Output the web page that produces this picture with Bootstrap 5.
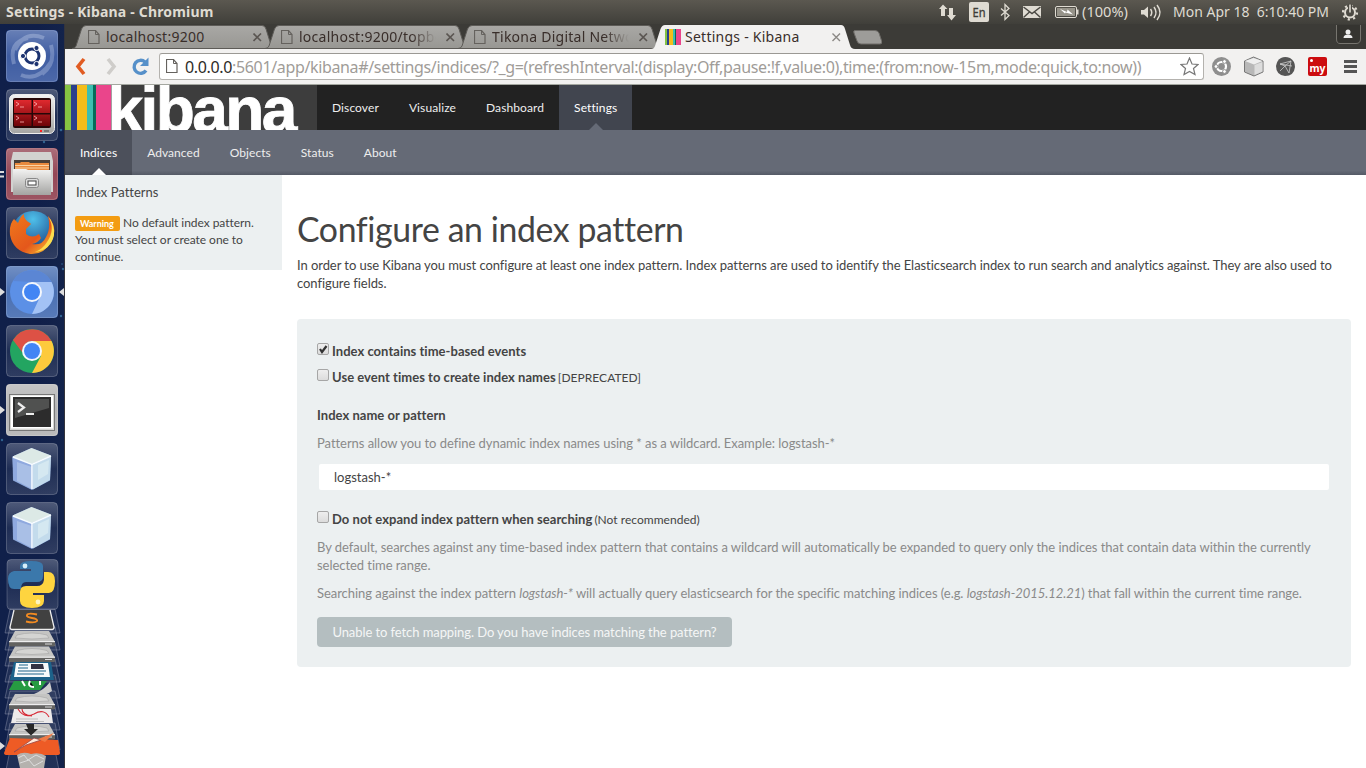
<!DOCTYPE html>
<html lang="en">
<head>
<meta charset="utf-8">
<title>Settings - Kibana</title>
<link rel="stylesheet" href="https://cdn.jsdelivr.net/npm/bootstrap@5.3.0/dist/css/bootstrap.min.css">
<style>
html,body{height:768px;overflow:hidden}
body{font-family:Lato,sans-serif;font-size:13px;line-height:18px;color:#444;background:#fff;font-variant-ligatures:none;letter-spacing:-.065px}
svg{display:block;flex:none;letter-spacing:0}
.ui{font-family:"Noto Sans",sans-serif;white-space:nowrap}
.panelbar{height:24px;background:linear-gradient(#5b5850,#403f3a);color:#dfdbd2;font-size:14px}
.wtitle{font-weight:700;font-size:14px;padding-left:6px;letter-spacing:.18px}
.tray{position:relative;width:430px;height:24px}
.launcher{width:65px;height:744px;padding:6px 0 0 6px;background:linear-gradient(90deg,#10204a,#101f49 60%,#13234b);border-right:1px solid #34343c;gap:7px;position:relative}
.pip{position:absolute}
.tabstrip{height:25px;background:#3c3b37;padding:1px 0 0 7px}
.ctab{width:193px;height:24px;position:relative;color:#392e2a;font-size:14px;padding:0 3px 0 16px}
.ctab .shape{position:absolute;left:0;top:0}
.ctab .inner{position:relative;height:24px}
.ctab .lbl{overflow:hidden;flex:1 1 0;min-width:0;margin-left:6px;margin-right:10px;letter-spacing:.25px}
.fade-lbl{-webkit-mask:linear-gradient(90deg,#000 82%,transparent)}
.toolbar{height:36px;background:#f2f1f0;border-bottom:1px solid #a4a7a0;padding-left:9px}
.omni{width:1045px;height:27px;margin-left:9px;border:1px solid #b4b2ae;border-top-color:#9b9994;border-radius:3px;background:#fff;padding:0 4px 0 6px;color:#a09c98;font-size:16px;letter-spacing:-.35px}
.omni b{font-weight:400;color:#2e2b28}
.knav{height:45px;background:#222;font-size:12px}
.knav,.ksub{letter-spacing:.06px}
.knav{letter-spacing:.1px}
.knav a,.ksub a{color:#eee;text-decoration:none;padding:0 15px;height:45px;line-height:45px;position:relative;display:block}
.knav a.on{background:#41454f;color:#fff}
.ksub{height:45px;background:linear-gradient(#656a76 90%,#555a66);font-size:12px}
.ksub a.on{background:linear-gradient(#4c505b 90%,#444852);color:#fff}
.on::after{content:"";position:absolute;left:50%;bottom:0;margin-left:-7px;border:7px solid transparent;border-top:0;border-bottom-color:#656a76}
.ksub .on::after{border-bottom-color:#fff}
.side{width:217px;height:95px;background:#ecf0f1;padding:8px 10px 0;letter-spacing:0}
.side p{font-size:12px;line-height:17px;margin:13px 0 0;letter-spacing:-.05px}
.warn{background:#f39c12;color:#fff;font-weight:700;font-size:9px;line-height:15px;border-radius:2px;padding:0 5px;width:45px;height:15px;display:inline-block;vertical-align:0}
.main{padding:36px 15px 0}
.main h1{font-size:33.8px;line-height:37px;margin:0 0 8px;font-weight:400;color:#444;letter-spacing:-.38px}
.well-box{background:#ecf0f1;border-radius:4px;margin-top:27px;height:348px;padding:23px 20px 0}
.help{color:#8a8a8a;margin:10px 0 0;letter-spacing:-.045px}
.chk{width:12px;height:12px;border:1px solid #a6a6a6;border-radius:2px;background:linear-gradient(#eee,#dcdcdc);margin:1px 3px 0 0;display:block;flex:none}
.opt{height:18px;font-weight:700;letter-spacing:.03px}
.opt small{font-size:12px;font-weight:400;margin-left:2px;line-height:19px}
.inp{margin:12px 2px 0;height:26px;background:#fff;border-radius:2px;padding:0 15px;border:0;width:1010px;color:#444;font-size:13px;display:block}
.fetch{margin-top:15px;background:#b4bec0;color:#f4f6f6;border-radius:4px;border:0;height:30px;width:415px;font-size:13px;display:block;padding:0;letter-spacing:-.08px}
</style>
</head>
<body>
<svg width="0" height="0" style="position:absolute">
<defs>
<linearGradient id="gl" x1="0" y1="0" x2="0" y2="1"><stop offset="0" stop-color="#fff" stop-opacity=".26"/><stop offset=".5" stop-color="#fff" stop-opacity=".06"/><stop offset="1" stop-color="#fff" stop-opacity=".13"/></linearGradient>
<linearGradient id="gy" x1="0" y1="0" x2="0" y2="1"><stop offset="0" stop-color="#f3f3f2"/><stop offset="1" stop-color="#a4a4a2"/></linearGradient>
<linearGradient id="rd" x1="0" y1="0" x2="0" y2="1"><stop offset="0" stop-color="#e0292e"/><stop offset="1" stop-color="#6e0408"/></linearGradient>
<linearGradient id="fx" x1="0" y1="0" x2="1" y2="1"><stop offset="0" stop-color="#f07a1c"/><stop offset=".6" stop-color="#e4571b"/><stop offset="1" stop-color="#fcd53a"/></linearGradient>
<radialGradient id="globe" cx=".5" cy=".2" r=".8"><stop offset="0" stop-color="#4fc0ea"/><stop offset="1" stop-color="#163a80"/></radialGradient>
<linearGradient id="tabg" x1="0" y1="0" x2="0" y2="1"><stop offset="0" stop-color="#a9a8a5"/><stop offset="1" stop-color="#989793"/></linearGradient>
<g id="tile"><rect x=".5" y=".5" width="51" height="51" rx="4" fill="url(#gl)" stroke="#fff" stroke-opacity=".22"/></g>
<g id="cube"><path d="M25.500 5 45 12.500 44 37.500 26 47 7 37.500 6.500 13.500Z" fill="#8aa6d8"/><path d="M25.500 5 45 12.500 26 21 6.500 13.500Z" fill="#dce9e6"/><path d="M6.500 14 26 21.500V46.500L7.500 37Z" fill="#8fa9df"/><path d="M11 19 26 24V46L11 38Z" fill="#a9bfe6"/><path d="M27 21.500 45 13.500 44 37 27 46.500Z" fill="#c3dbec"/><path d="M32 22 43 17 42 31 32 37Z" fill="#d5e8f1"/><path d="M7 14 26 21.500 45 13M26 21.500V46" stroke="#f7fcff" stroke-width="1.600" fill="none"/></g>
<g id="drive"><path d="M15 0H49L55 11V14Q55 15 53 15H11Q9 15 9 14V11Z" fill="#c4c4c2"/><path d="M9 11H55V14Q55 15.500 53 15.500H11Q9 15.500 9 14Z" fill="#626260"/><path d="M9 10.700H55" stroke="#f8f8f8" stroke-width="1"/><path d="M17 4Q32 0 47 4L49 7Q32 9 15 7Z" fill="#d4d4d2" stroke="#a4a4a4" stroke-width=".6"/><path d="M45 13H52" stroke="#ddd"/></g>
<g id="page"><path d="M.5.500H7.500L11 4.500V13.500H.5Z" fill="none" stroke="#65625e" stroke-width="1.200"/><path d="M7.500.500V4.500H11" fill="none" stroke="#65625e"/></g>
<g id="kb"><path d="M0 0h2v16H0z" fill="#85c342"/><path d="M2 0h2v16H2z" fill="#2a3f8c"/><path d="M4 0h4v16H4z" fill="#f4bd19"/><path d="M8 0h2v16H8z" fill="#3cbeb1"/><path d="M10 0h1v16h-1z" fill="#056b59"/><path d="M11 0h5v16h-5z" fill="#ea458b"/></g>
<path id="dulltab" d="M0 23.500Q3 23.500 4 21L9.500 4Q11 .5 14 .5H190Q193 .5 194 4L199 20Q200 23.500 203 23.500Z" fill="url(#tabg)" stroke="#5d5b57"/>
</defs></svg>

<header class="panelbar ui d-flex align-items-center justify-content-between">
  <div class="wtitle">Settings - Kibana - Chromium</div>
  <div class="tray d-flex align-items-center">
    <svg width="430" height="24" viewBox="936 0 430 24" fill="#dfdbd2">
      <path d="M939 9 943 4.500 947.500 9H945V16H941V9ZM949 8H953V15H956L951.500 20.500 947 15H949Z"/>
      <rect x="969" y="2" width="20" height="20" rx="2"/>
      <text x="972.500" y="17" font-size="12.500" fill="#3e3c37" stroke="#3e3c37" stroke-width=".3" textLength="13" lengthAdjust="spacingAndGlyphs">En</text>
      <path d="M1001 8.500 1009 15.500 1005 19.500V4.500L1009 8.500 1001 15.500" fill="none" stroke="#dfdbd2" stroke-width="1.300"/>
      <rect x="1023" y="6" width="18" height="12"/><path d="M1023.500 7 1032 13.500 1040.500 7M1023.500 17.500 1029.500 12M1040.500 17.500 1034.500 12" fill="none" stroke="#494741" stroke-width="1.400"/>
      <rect x="1055.500" y="6.500" width="21" height="11" rx="1.500" fill="none" stroke="#dfdbd2"/><rect x="1057" y="8" width="18" height="8" fill="#969389"/><path d="M1077 9.500H1078.500V14.500H1077Z"/><path d="M1060 9 1067 12 1067.500 9.500 1073 14.500 1065.500 12.500 1065 13.500Z" fill="#fff"/>
      <text x="1082" y="17" font-size="14" textLength="46" lengthAdjust="spacingAndGlyphs">(100%)</text>
      <path d="M1141 10H1144L1148 6.500V18L1144 14.500H1141Z"/><path d="M1150.500 9Q1153 12.500 1150.500 16M1154 7Q1158 12.500 1154 18M1157 5Q1163 12.500 1157 20" fill="none" stroke="#dfdbd2" stroke-width="1.500"/>
      <text x="1173" y="17" font-size="14" textLength="156" lengthAdjust="spacingAndGlyphs">Mon Apr 18&#160; 6:10:40 PM</text>
      <circle cx="1350" cy="12.500" r="5" fill="none" stroke="#dfdbd2" stroke-width="2"/><circle cx="1350" cy="12.500" r="7" fill="none" stroke="#dfdbd2" stroke-width="2.200" stroke-dasharray="2.200 3.300"/><path d="M1348 4H1352V12H1348Z" fill="#4b4942"/><path d="M1349.200 4.500H1350.800V12.500H1349.200Z"/>
    </svg>
  </div>
</header>

<div class="d-flex">
<aside class="launcher d-flex flex-column flex-shrink-0">
  <svg class="pip" style="left:0;top:0" width="64" height="744"><g fill="#3e7fb0" opacity=".7"><circle cx="61" cy="106" r="1.300"/><circle cx="44" cy="118" r="1.200"/><circle cx="63" cy="245" r="1.200"/><circle cx="61" cy="292" r="1.200"/><circle cx="2" cy="416" r="1.200"/><circle cx="62" cy="240" r=".8"/></g><g fill="#ddd"><path d="M0 147H4V149H0ZM0 151.500H4V153.500H0ZM0 264 5 268 0 272ZM64 264 59 268 64 272ZM0 382 5 386 0 390ZM0 718 5 722 0 726Z"/></g></svg>
  <svg width="52" height="52"><rect width="52" height="52" rx="4" fill="#32529c"/><g fill="none" stroke="#a9bbe0" opacity=".4" stroke-width="4"><path d="M8 34Q2 12 22 8M45 15Q50 34 36 44M15 45Q32 52 45 32M38 8Q18 0 9 20"/></g><use href="#tile"/><circle cx="26" cy="26" r="14" fill="#fff"/><circle cx="26" cy="26" r="7" fill="none" stroke="#1d3370" stroke-width="3"/><g fill="#1d3370" stroke="#fff" stroke-width="1"><circle cx="17" cy="26" r="2.600"/><circle cx="30.500" cy="18" r="2.600"/><circle cx="30.500" cy="34" r="2.600"/></g></svg>
  <svg width="52" height="52"><use href="#tile"/><rect x="3.500" y="5.500" width="45" height="39" rx="5" fill="url(#gy)" stroke="#eee"/><rect x="7" y="9" width="38" height="30" rx="2" fill="#260708"/><g fill="url(#rd)"><path d="M8 11H25.500V24H8ZM27 11H44V24H27ZM8 25.500H25.500V37H8ZM27 25.500H44V37H27Z"/></g><path d="M10 13 13 15 10 17M14 18H18M28 13 31 15 28 17M32 18H36M10 27 13 29 10 31M14 33H18M28 27 31 29 28 31M32 33H36" fill="none" stroke="#ffb5b5" stroke-width=".8"/><path d="M34 41h2v2h-2z" fill="#f22"/><path d="M38 41h5v2h-5z" fill="#777"/></svg>
  <svg width="52" height="52"><rect width="52" height="52" rx="4" fill="#8e3b4b"/><use href="#tile"/><path d="M7 4H45L47 13V44H5V13Z" fill="#d2d2d0"/><path d="M8 12H44V24H8Z" fill="#4a4038"/><path d="M9 15H14L15 14H23L24 15H43V23H9Z" fill="#e98a3d"/><path d="M9 17.500H43M9 20H43" stroke="#fbd4a4" stroke-width="1"/><path d="M7 21H20L22 22H45V47H7Z" fill="url(#gy)"/><rect x="19.500" y="30.500" width="13" height="9" rx="2" fill="#ddd" stroke="#888"/><rect x="22" y="33" width="8" height="4" fill="#fff" stroke="#444"/></svg>
  <svg width="52" height="52"><use href="#tile"/><circle cx="27" cy="25" r="21" fill="url(#globe)"/><path d="M42 9Q53 22 45 35 38 48 24 47 7 44 4 28 3 17 8 12L12 16Q15 8 18 7 17 12 24 16L25 17 20 22 20 27Q26 32 33 27L35 31Q32 36 26 37 36 39 40 30 45 22 42 9Z" fill="url(#fx)"/><path d="M42 9Q50 22 41 35 37 42 29 45 45 43 48 28 49 17 42 9Z" fill="#fbdd4d"/></svg>
  <svg width="52" height="52"><rect width="52" height="52" rx="4" fill="#3f67ae"/><use href="#tile"/><circle cx="26" cy="26" r="22" fill="#5c90e6"/><path d="M7 15A22 22 0 0 1 45.500 16H26Z" fill="#5b86d4"/><path d="M26 16H45.500A22 22 0 0 1 26 48L34 31Z" fill="#a3c2f5"/><circle cx="26" cy="26" r="10" fill="#f4f7fc"/><circle cx="26" cy="26" r="8" fill="#4285f4"/></svg>
  <svg width="52" height="52"><use href="#tile"/><circle cx="26" cy="26" r="22" fill="#23a561"/><path d="M7 15A22 22 0 0 1 45.500 16H26Q17 17 16 27Z" fill="#dd5145"/><path d="M26 16H45.500A22 22 0 0 1 26 48L35 31Z" fill="#fdca3c"/><circle cx="26" cy="26" r="10" fill="#f4f7fc"/><circle cx="26" cy="26" r="8" fill="#4285f4"/></svg>
  <svg width="52" height="52"><rect width="52" height="52" rx="4" fill="#b0b0b1"/><use href="#tile"/><rect x="3.500" y="10.500" width="45" height="36" fill="#d5d5d3" stroke="#777"/><rect x="5" y="11.500" width="42" height="33" fill="#fff"/><rect x="7" y="13" width="38" height="30" fill="#2c2c2c"/><path d="M9 15H43V24L9 34Z" fill="#505150"/><path d="M12 19 18 23.500 12 28M20 30H28" stroke="#eee" stroke-width="2.200" fill="none"/></svg>
  <svg width="52" height="52"><use href="#tile"/><use href="#cube"/></svg>
  <svg width="52" height="52"><use href="#tile"/><use href="#cube"/></svg>
  <svg class="pip" style="left:0;top:535px" width="64" height="209" viewBox="0 559 64 209"><g transform="translate(6 559)"><rect x="1" y=".5" width="51" height="50" rx="4" fill="url(#gl)" stroke="#fff" stroke-opacity=".2"/><path d="M14 7Q14 2 25 2 37 2 37 7V17Q37 23 31 23H20Q15 23 15 30H8Q2 30 2 20 2 13 8 12H25V10H14Z" fill="#3b78ab"/><path d="M38 13H42Q49 13 49 22 49 34 43 34H27V36H38V42Q38 49 26 49 14 49 14 42V33Q14 27 20 27H31Q37 27 38 21Z" fill="#fed43f"/><circle cx="19" cy="7" r="2.400" fill="#d6eefa"/><circle cx="32" cy="43" r="2.400" fill="#fff5c0"/></g>
    <g fill="#fff" fill-opacity=".07" stroke="#ccd" stroke-opacity=".3"><path d="M10 609H55L60 633H5Z"/><path d="M10 627H55L60 650H5Z"/><path d="M10 643H55L60 666H5Z"/><path d="M10 659H55L60 682H5Z"/><path d="M10 675H55L60 698H5Z"/><path d="M10 691H55L60 714H5Z"/><path d="M10 707H55L60 730H5Z"/><path d="M10 723H55L60 750H5Z"/><path d="M10 750H55L60 775H5Z"/></g>
    <path d="M14 610H50L54 627Q54 629 52 629H12Q10 629 10 627Z" fill="#414141"/><path d="M14 610 10 627Q10 629.500 12 629.500H52Q54 629.500 54 627L50 610" fill="none" stroke="#eee" stroke-width="1.300"/><path d="M37 614.500Q28 612.500 27 615 26 617 32 618 38 619 37 621 35 623.500 26 621.500" stroke="#f28b21" stroke-width="2" fill="none"/>
    <use href="#drive" y="631"/><use href="#drive" y="646.500"/>
    <path d="M14 662H51L54 680H10Z" fill="#1c628a"/><path d="M16 663H48L50 677H14Z" fill="#f7fafb"/><path d="M31 664H43L44 669H31Z" fill="#334"/><path d="M19 665H28M18 668H28M18 671H46M17 674H44" stroke="#1c628a" stroke-width="1.200"/>
    <path d="M14 681H47L40 690H9Z" fill="#279b42"/><path d="M22 681 25 686M30 681Q27 687 34 687M40 681V685" stroke="#fff" stroke-width="2"/><path d="M50 682 52 691Q42 698 34 694 44 690 50 682Z" fill="#ccc"/>
    <use href="#drive" y="694"/>
    <path d="M14 709H51L53 723H11Z" fill="#eceaea"/><path d="M18 709Q24 719 34 714 44 708 49 717M22 709Q22 715 32 716" fill="none" stroke="#d72b37" stroke-width="1.100"/><path d="M16 719H38M16 721.500H44" stroke="#aaa" stroke-width=".7"/>
    <use href="#drive" y="724"/><path d="M26 724H34V729H38L31 735.500 24 729H28Z" fill="#282828"/>
    <path d="M10 738 58 740 60 753Q60 755 57 755H7Q4 755 4 753Z" fill="#ee5b25"/><path d="M14 752 34 738 41 740 26 745Z" fill="#ffe8d8" stroke="#944" stroke-width=".8"/><path d="M38 739 54 733 45 742Z" fill="#f07a45"/>
    <path d="M17 755Q23 751 31 754 40 752 46 756L44 768H20Z" fill="#b5b2ae"/><path d="M18 758 24 755 28 760 36 755 44 759M20 763 29 760 34 766 43 761" stroke="#ddd" fill="none"/>
  </svg>
</aside>

<div class="flex-grow-1">
  <div class="tabstrip ui d-flex position-relative">
    <div class="ctab"><svg class="shape" width="203" height="24"><use href="#dulltab"/></svg><div class="inner d-flex align-items-center"><svg width="12" height="14"><use href="#page"/></svg><span class="lbl">localhost:9200</span><svg width="9" height="9"><path d="M.5.500 8 8M8 .5.500 8" stroke="#5b5652" stroke-width="1.600"/></svg></div></div>
    <div class="ctab"><svg class="shape" width="203" height="24"><use href="#dulltab"/></svg><div class="inner d-flex align-items-center"><svg width="12" height="14"><use href="#page"/></svg><span class="lbl fade-lbl">localhost:9200/topbeat</span><svg width="9" height="9"><path d="M.5.500 8 8M8 .5.500 8" stroke="#5b5652" stroke-width="1.600"/></svg></div></div>
    <div class="ctab"><svg class="shape" width="203" height="24"><use href="#dulltab"/></svg><div class="inner d-flex align-items-center"><svg width="12" height="14"><use href="#page"/></svg><span class="lbl fade-lbl">Tikona Digital Networks</span><svg width="9" height="9"><path d="M.5.500 8 8M8 .5.500 8" stroke="#5b5652" stroke-width="1.600"/></svg></div></div>
    <div class="ctab" style="padding-left:14px"><svg class="shape" width="204" height="24"><path d="M0 24Q3 24 4 21L9.500 4Q11 0 14 0H190Q193 0 194 4L199 20Q200 24 204 24Z" fill="#f2f1f0"/></svg><div class="inner d-flex align-items-center"><svg width="16" height="16"><use href="#kb"/></svg><span class="lbl" style="margin-left:4px">Settings - Kibana</span><svg width="9" height="9"><path d="M.5.500 8 8M8 .5.500 8" stroke="#8b8885" stroke-width="1.400"/></svg></div></div>
    <svg width="34" height="22" style="margin:4px 0 0 4px"><path d="M4 1.500H24Q27 1.500 28 4L31 13Q31 15 29 15H10Q7 15 6 12L3 4Q2 1.500 4 1.500Z" fill="#9d9c99" stroke="#6d6b67" transform="translate(3)"/></svg>
    <svg class="ms-auto" width="30" height="24"><path d="M.5 0V14Q.5 18.500 4 18.500H20Q24.500 18.500 24.500 14V0" fill="#353430" stroke="#77756f"/><circle cx="12" cy="7" r="2.500" fill="#eee"/><path d="M7.500 13Q7.500 9.500 12 9.500 16.500 9.500 16.500 13Z" fill="#eee"/></svg>
  </div>
  <div class="toolbar ui d-flex align-items-center">
    <svg width="76" height="24" fill="none"><path d="M10 4 4 11.500 10 19" stroke="#e15c22" stroke-width="3.600"/><path d="M34 4 40 11.500 34 19" stroke="#cfcdca" stroke-width="3.600"/><path d="M72 15.500A6.500 6.500 0 1 1 71 7" stroke="#5690c9" stroke-width="3.400"/><path d="M74.500 2.500V11H66Z" fill="#5690c9"/></svg>
    <div class="omni d-flex align-items-center"><svg width="12" height="15" style="margin-right:7px"><use href="#page"/></svg><span class="flex-grow-1"><b>0.0.0.0</b>:5601/app/kibana#/settings/indices/?_g=(refreshInterval:(display:Off,pause:!f,value:0),time:(from:now-15m,mode:quick,to:now))</span><svg width="19" height="19"><path d="M9.500 1 12 7 18 7.500 13.500 11.500 15 17.500 9.500 14.500 4 17.500 5.500 11.500 1 7.500 7 7Z" fill="#fff" stroke="#777" stroke-width="1.200"/></svg></div>
    <svg width="155" height="24" viewBox="1204 55 155 24"><circle cx="1221.500" cy="66.500" r="9.500" fill="#8e8e8e"/><circle cx="1221.500" cy="66.500" r="4.500" fill="none" stroke="#fff" stroke-width="2.200"/><g fill="#fff" stroke="#8e8e8e"><circle cx="1216" cy="66.500" r="1.900"/><circle cx="1224.500" cy="61.500" r="1.900"/><circle cx="1224.500" cy="71.500" r="1.900"/></g>
    <path d="M1253.500 57 1263 61V72L1254 76 1244.500 72V61Z" fill="#b8b8b8" stroke="#777"/><path d="M1245 61 1253.500 58 1262.500 61 1254 64.500Z" fill="#eee"/><path d="M1254.500 65 1262.500 62V71.500L1254.500 75Z" fill="#ddd"/>
    <path d="M1281 58Q1285 56 1290 58 1295 61 1295 67 1294 76 1285 76 1276 75 1276 66 1277 60 1281 58Z" fill="#555"/><path d="M1280 64 1291 61 1289 73 1285 66 1280 64 1292 66M1280 71 1285 66 1291 61" fill="none" stroke="#ccc" stroke-width=".8"/>
    <rect x="1308" y="57" width="19" height="19" rx="2" fill="#cc0c0f"/><circle cx="1311.500" cy="60.500" r="1.500" fill="#fff"/><text x="1309.500" y="72" font-size="11" font-weight="700" fill="#fff" textLength="16" lengthAdjust="spacingAndGlyphs">my</text>
    <path d="M1344 61.500H1357M1344 66.500H1357M1344 71.500H1357" stroke="#555" stroke-width="2.800"/></svg>
  </div>
  <nav class="knav d-flex">
    <svg width="252" height="45"><path d="M0 0H252V45H0Z" fill="#3d3d3d"/><path d="M0 0h6v45H0z" fill="#85c342"/><path d="M6 0h6v45H6z" fill="#2a3f8c"/><path d="M12 0h10v45H12z" fill="#f4bd19"/><path d="M22 0h6v45h-6z" fill="#3cbeb1"/><path d="M28 0h3v45h-3z" fill="#056b59"/><path d="M31 0h15v45H31z" fill="#ea458b"/><text x="42.500" y="46.500" font-family="Liberation Sans,Arial,sans-serif" font-weight="700" font-size="64" fill="#fff" stroke="#fff" stroke-width=".8" style="letter-spacing:-2.600px">kibana</text></svg>
    <a href="#">Discover</a><a href="#">Visualize</a><a href="#">Dashboard</a><a href="#" class="on">Settings</a>
  </nav>
  <nav class="ksub d-flex"><a href="#" class="on">Indices</a><a href="#">Advanced</a><a href="#">Objects</a><a href="#">Status</a><a href="#">About</a></nav>
  <div class="d-flex">
    <div class="side flex-shrink-0"><div style="padding-left:1px">Index Patterns</div><p><span class="warn">Warning</span> No default index pattern. You must select or create one to continue.</p></div>
    <main class="main flex-grow-1">
      <h1>Configure an index pattern</h1>
      <p class="m-0">In order to use Kibana you must configure at least one index pattern. Index patterns are used to identify the Elasticsearch index to run search and analytics against. They are also used to configure fields.</p>
      <div class="well-box">
        <div class="opt d-flex"><span class="chk"><svg width="10" height="10"><path d="M2 5 4 8 8.500 2" fill="none" stroke="#333" stroke-width="2.200"/></svg></span>Index contains time-based events</div>
        <div class="opt d-flex mt-2"><span class="chk"></span>Use event times to create index names <small>[DEPRECATED]</small></div>
        <div class="opt" style="margin-top:20px">Index name or pattern</div>
        <p class="help">Patterns allow you to define dynamic index names using * as a wildcard. Example: logstash-*</p>
        <input class="inp" value="logstash-*">
        <div class="opt d-flex" style="margin-top:20px"><span class="chk"></span>Do not expand index pattern when searching <small>(Not recommended)</small></div>
        <p class="help">By default, searches against any time-based index pattern that contains a wildcard will automatically be expanded to query only the indices that contain data within the currently selected time range.</p>
        <p class="help">Searching against the index pattern <em>logstash-*</em> will actually query elasticsearch for the specific matching indices (e.g. <em>logstash-2015.12.21</em>) that fall within the current time range.</p>
        <button class="fetch">Unable to fetch mapping. Do you have indices matching the pattern?</button>
      </div>
    </main>
  </div>
</div>
</div>
<script src="https://cdn.jsdelivr.net/npm/bootstrap@5.3.0/dist/js/bootstrap.bundle.min.js"></script>
</body>
</html>
